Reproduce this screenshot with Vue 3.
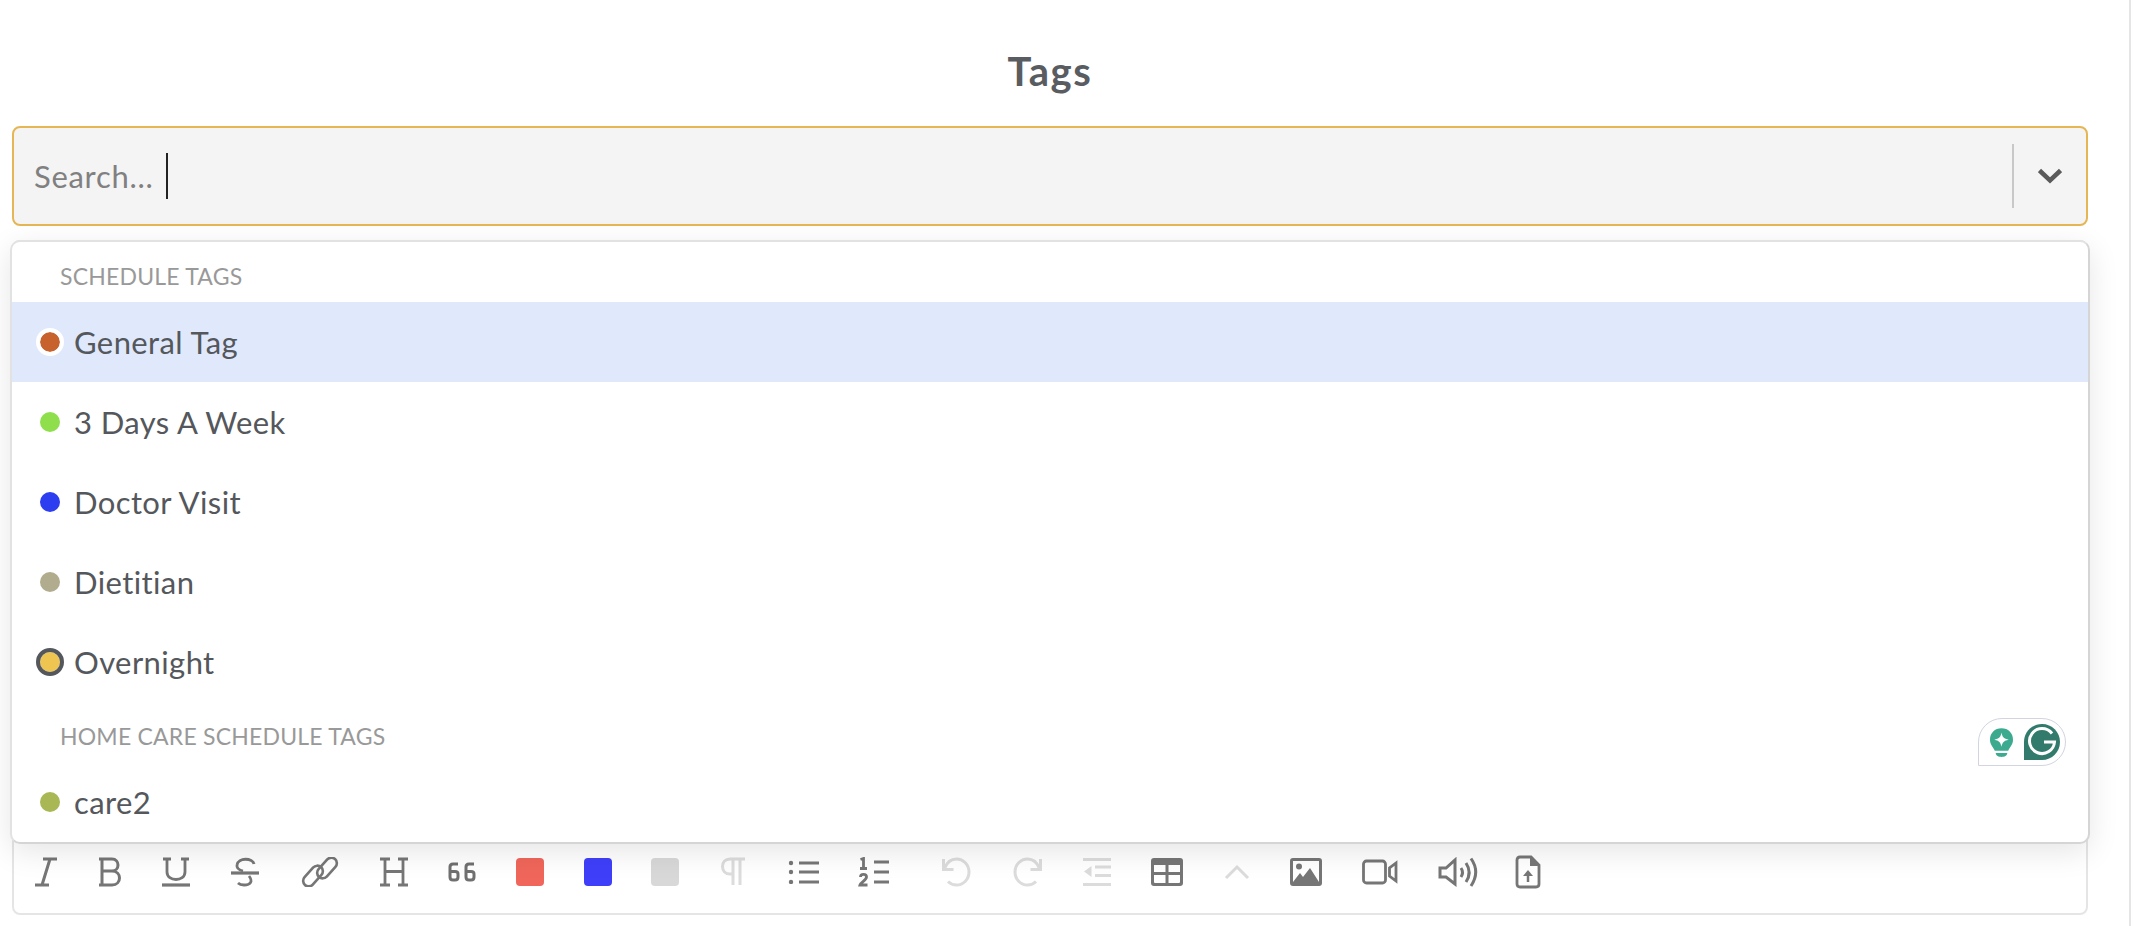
<script setup>
const groups = [
  { title: 'SCHEDULE TAGS', items: [
    { name: 'General Tag', color: '#c8622c', ring: 'ring-white', active: true },
    { name: '3 Days A Week', color: '#8fdf4c' },
    { name: 'Doctor Visit', color: '#2d3df0' },
    { name: 'Dietitian', color: '#b1ac8e' },
    { name: 'Overnight', color: '#efc552', ring: 'ring-dark' }
  ]},
  { title: 'HOME CARE SCHEDULE TAGS', items: [
    { name: 'care2', color: '#a9b754' }
  ]}
]
const tools = [
  { w: 64, k: 'italic' }, { w: 64, k: 'bold' }, { w: 68, k: 'under' }, { w: 70, k: 'strike' },
  { w: 80, k: 'link' }, { w: 68, k: 'head' }, { w: 68, k: 'quote' }, { w: 68, k: 'red' },
  { w: 68, k: 'blue' }, { w: 66, k: 'gray' }, { w: 70, k: 'para' }, { w: 70, k: 'ul' },
  { w: 72, k: 'ol' }, { w: 92, k: 'undo' }, { w: 52, k: 'redo' }, { w: 86, k: 'outdent' },
  { w: 54, k: 'table' }, { w: 86, k: 'chev' }, { w: 52, k: 'image' }, { w: 96, k: 'video' },
  { w: 60, k: 'audio' }, { w: 80, k: 'file' }
]
</script>

<template>
  <div class="page">
    <h1 class="title">Tags</h1>
    <div class="field">
      <span class="placeholder">Search...</span>
      <span class="caret"></span>
      <span class="spacer"></span>
      <span class="divider"></span>
      <svg class="arrow" viewBox="0 0 24 16" width="24" height="16"><path d="M1.500 2.500 L12 12.500 L22.500 2.500" fill="none" stroke="#5a5a5a" stroke-width="4.500"/></svg>
    </div>
    <div class="editor">
      <div class="toolbar">
        <span v-for="t in tools" :key="t.k" class="tool" :style="{ width: t.w + 'px' }">
          <svg v-if="t.k === 'italic'" viewBox="0 0 30 30" width="30" height="30"><g stroke="#767676" stroke-width="3" fill="none"><path d="M12 2 H26 M4 28 H18 M19 2 L11 28"/></g></svg>
          <svg v-else-if="t.k === 'bold'" viewBox="0 0 30 30" width="30" height="30"><g stroke="#767676" stroke-width="3" fill="none"><path d="M4 2 H17 C25 2 25 14 17 14 H7 M17 14 C27 14 27 28 17 28 H4 M7 2 V28"/></g></svg>
          <svg v-else-if="t.k === 'under'" viewBox="0 0 30 30" width="30" height="30"><g stroke="#767676" stroke-width="2.800" fill="none"><path d="M2 2 H10 M20 2 H28 M6 2 V15 C6 25 24 25 24 15 V2"/><path d="M1 28 H29" stroke-width="3.200"/></g></svg>
          <svg v-else-if="t.k === 'strike'" viewBox="0 0 30 30" width="30" height="30"><g stroke="#767676" stroke-width="2.800" fill="none"><path d="M24 7 C23 1 8 0 7 8 C6.500 11 9 13 13 14"/><path d="M1 16 H29" stroke-width="3.200"/><path d="M19 19 C23 24 21 28 14 28 C11 28 9 27 8 26"/></g></svg>
          <svg v-else-if="t.k === 'link'" viewBox="0 0 38 30" width="38" height="30"><g stroke="#767676" stroke-width="2.600" fill="none"><rect x="0" y="13.500" width="24" height="11" rx="5.500" transform="rotate(-48 12 19)"/><rect x="14" y="5.500" width="24" height="11" rx="5.500" transform="rotate(-48 26 11)"/></g></svg>
          <svg v-else-if="t.k === 'head'" viewBox="0 0 30 30" width="30" height="30"><g stroke="#767676" stroke-width="2.800" fill="none"><path d="M1 2 H11 M19 2 H29 M1 28 H11 M19 28 H29 M6 2 V28 M24 2 V28 M6 14.500 H24"/></g></svg>
          <svg v-else-if="t.k === 'quote'" viewBox="0 0 30 20" width="30" height="20"><g stroke="#707070" stroke-width="3" fill="none"><path d="M11 2 H6 Q3 2 3 5 V15 Q3 18 6 18 H8 Q11 18 11 15 V12 Q11 9.500 8 9.500 H3"/><path d="M27 2 H22 Q19 2 19 5 V15 Q19 18 22 18 H24 Q27 18 27 15 V12 Q27 9.500 24 9.500 H19"/></g></svg>
          <span v-else-if="t.k === 'red'" class="swatch red"></span>
          <span v-else-if="t.k === 'blue'" class="swatch blue"></span>
          <span v-else-if="t.k === 'gray'" class="swatch gray"></span>
          <svg v-else-if="t.k === 'para'" viewBox="0 0 28 30" width="28" height="30"><g fill="none" stroke="#dcdcdc" stroke-width="3"><path d="M26 2 H11 C1 2 1 17 11 17 H14 M14 2 V28 M21 2 V28"/></g></svg>
          <svg v-else-if="t.k === 'ul'" viewBox="0 0 32 24" width="32" height="24"><g fill="#767676"><circle cx="4" cy="3" r="2.200"/><circle cx="4" cy="12" r="2.200"/><circle cx="4" cy="22" r="2.200"/><rect x="12" y="1.500" width="20" height="3"/><rect x="12" y="10.500" width="20" height="3"/><rect x="12" y="20.500" width="20" height="3"/></g></svg>
          <svg v-else-if="t.k === 'ol'" viewBox="0 0 32 30" width="32" height="30"><g fill="#767676"><rect x="16" y="3.500" width="15" height="3"/><rect x="16" y="13.500" width="15" height="3"/><rect x="16" y="23.500" width="15" height="3"/></g><g fill="none" stroke="#767676" stroke-width="2.800"><path d="M2.500 2.500 L5.500 1.500 V11 M2 11.500 H9"/><path d="M2.500 20 C2.500 16.500 8.500 16.500 8.500 20 C8.500 23 3 25 2 28 H9.500"/></g></svg>
          <svg v-else-if="t.k === 'undo'" viewBox="0 0 30 30" width="30" height="30"><g fill="none" stroke="#dcdcdc" stroke-width="3"><path d="M2.500 2 V12.500 H12.500"/><path d="M3.500 11.500 C6 5 11 2 15.500 2 A12.500 13 0 0 1 15.500 28 C12 28 9 26.500 7 24.500"/></g></svg>
          <svg v-else-if="t.k === 'redo'" viewBox="0 0 30 30" width="30" height="30"><g fill="none" stroke="#dcdcdc" stroke-width="3"><path d="M27.500 2 V12.500 H17.500"/><path d="M26.500 11.500 C24 5 19 2 14.500 2 A12.500 13 0 0 0 14.500 28 C18 28 21 26.500 23 24.500"/></g></svg>
          <svg v-else-if="t.k === 'outdent'" viewBox="0 0 30 30" width="30" height="30"><g fill="#dcdcdc"><rect x="1" y="1" width="28" height="3"/><rect x="13" y="8.500" width="16" height="3"/><rect x="13" y="17" width="16" height="3"/><rect x="1" y="26" width="28" height="3"/><path d="M9.500 9 V20 L2 14.500 Z"/></g></svg>
          <svg v-else-if="t.k === 'table'" viewBox="0 0 32 30" width="32" height="30"><path fill="#767676" fill-rule="evenodd" d="M3 1 H29 Q32 1 32 4 V26 Q32 29 29 29 H3 Q0 29 0 26 V4 Q0 1 3 1 Z M3 8 V15 H14.500 V8 Z M17.500 8 V15 H29 V8 Z M3 18 V25 Q3 26 4 26 H14.500 V18 Z M17.500 18 V26 H28 Q29 26 29 25 V18 Z"/></svg>
          <svg v-else-if="t.k === 'chev'" viewBox="0 0 26 16" width="26" height="16"><path d="M2 14 L13 3 L24 14" fill="none" stroke="#dcdcdc" stroke-width="3"/></svg>
          <svg v-else-if="t.k === 'image'" viewBox="0 0 32 30" width="32" height="30"><path fill="#767676" fill-rule="evenodd" d="M3 1 H29 Q32 1 32 4 V26 Q32 29 29 29 H3 Q0 29 0 26 V4 Q0 1 3 1 Z M3 4 V25 L10 16 L13 20 L20 11 L29 25 V4 Z"/><circle cx="9" cy="9.500" r="3" fill="#767676"/></svg>
          <svg v-else-if="t.k === 'video'" viewBox="0 0 36 26" width="36" height="26"><g fill="none" stroke="#767676" stroke-width="2.800"><rect x="1.500" y="2" width="22" height="22" rx="3"/><path d="M34 4 V22 L27.500 17 V9 Z"/></g></svg>
          <svg v-else-if="t.k === 'audio'" viewBox="0 0 40 30" width="40" height="30"><g fill="none" stroke="#767676" stroke-width="3"><path d="M2 11 H8 L17 3 V27 L8 20 H2 Z"/><path d="M23 11 C25 14 25 17 23 20"/><path d="M28 6 C32 12 32 19 28 25"/><path d="M33 1.500 C39 10 39 20 33 29"/></g></svg>
          <svg v-else-if="t.k === 'file'" viewBox="0 0 26 34" width="26" height="34"><g fill="none" stroke="#767676" stroke-width="2.800"><path d="M5 2 H16 L24 10 V29 Q24 32 21 32 H5 Q2 32 2 29 V5 Q2 2 5 2 Z"/><path d="M13 27 V20" stroke-width="2.500"/></g><path d="M8 21 L13 15 L18 21 Z" fill="#767676"/><path d="M15 2 H17 L24 9 V11 H15 Z" fill="#767676"/></svg>
        </span>
      </div>
    </div>

    <div class="menu">
      <template v-for="g in groups" :key="g.title">
        <div class="group-title">{{ g.title }}</div>
        <div v-for="o in g.items" :key="o.name" class="option" :class="{ active: o.active }">
          <span class="dot" :class="o.ring" :style="{ background: o.color }"></span>
          <span>{{ o.name }}</span>
        </div>
      </template>
      <div class="badge">
        <svg viewBox="0 0 24 30" width="23" height="29"><path fill="#3caa8e" d="M12 0 C19 0 24 5 24 12 C24 17 21 19 19 23.500 H5 C3 19 0 17 0 12 C0 5 5 0 12 0 Z"/><path fill="#3caa8e" d="M6 26 H18 C18 29 15 30 12 30 C9 30 6 29 6 26 Z"/><path fill="#fff" d="M12 4.500 C13 9.500 14.500 11 19.500 12 C14.500 13 13 14.500 12 19.500 C11 14.500 9.500 13 4.500 12 C9.500 11 11 9.500 12 4.500 Z"/></svg>
        <svg viewBox="0 0 36 36" width="36" height="36"><path fill="#327a6c" d="M18 0 C28 0 36 8 36 18 C36 28 28 36 18 36 H0 V18 C0 8 8 0 18 0 Z"/><path fill="none" stroke="#fff" stroke-width="3" d="M28 9.500 A12.500 12.500 0 1 0 30.500 18 H20"/></svg>
      </div>
    </div>
    <div class="rail"></div>
  </div>
</template>

<style>
html, body { margin: 0; background: #fff; }
</style>

<style scoped>
.page {
  position: relative;
  width: 2140px;
  height: 926px;
  overflow: hidden;
  background: #fff;
  font-family: Lato, "Open Sans", sans-serif;
  padding: 0 52px 0 12px;
  box-sizing: border-box;
  display: flex;
  flex-direction: column;
}
.title {
  margin: 0;
  height: 126px;
  line-height: 142px;
  box-sizing: border-box;
  text-align: center;
  font-size: 40px;
  letter-spacing: 1.6px;
  font-weight: 700;
  color: #595c60;
}
.field {
  height: 100px;
  box-sizing: border-box;
  border: 2px solid #e6b655;
  border-radius: 8px;
  background: #f4f4f4;
  display: flex;
  align-items: center;
  padding: 0 24px 0 20px;
}
.placeholder { font-size: 31px; letter-spacing: 0.7px; color: #808080; }
.caret { width: 2px; height: 46px; background: #222; margin-left: 12px; }
.spacer { flex: 1; }
.divider { width: 2px; height: 64px; background: #c8c8c8; margin-right: 24px; }
.editor {
  flex: none;
  margin-top: 14px;
  height: 675px;
  box-sizing: border-box;
  border: 2px solid #e5e5e5;
  border-radius: 8px;
  display: flex;
  flex-direction: column;
  justify-content: flex-end;
  padding-bottom: 18px;
}
.toolbar { display: flex; align-items: center; height: 46px; }
.tool { flex: none; display: flex; justify-content: center; align-items: center; }
.swatch { display: block; width: 28px; height: 28px; border-radius: 4px; }
.red { background: #f0665a; }
.blue { background: #3f3ffa; }
.gray { background: #d8d8d8; }
.menu {
  position: absolute;
  left: 10px;
  top: 240px;
  width: 2080px;
  height: 604px;
  box-sizing: border-box;
  border: 2px solid #e2e2e2;
  border-bottom-color: #d5d5d5;
  border-right-color: #d5d5d5;
  border-radius: 10px;
  background: #fff;
  box-shadow: 0 8px 30px rgba(0, 0, 0, 0.1);
  overflow: hidden;
}
.group-title {
  height: 60px;
  box-sizing: border-box;
  padding: 4px 0 0 48px;
  line-height: 60px;
  font-size: 23px;
  letter-spacing: 0.2px;
  color: #999;
}
.option {
  height: 80px;
  display: flex;
  align-items: center;
  font-size: 31px;
  letter-spacing: 0.4px;
  color: #54575b;
  padding-left: 28px;
  gap: 14px;
}
.option.active { background: #e0e9fc; }
.dot {
  width: 20px;
  height: 20px;
  flex: none;
  margin: 0 -4px;
  border: 4px solid transparent;
  border-radius: 50%;
  background-clip: padding-box !important;
}
.ring-white { border-color: #fff; }
.ring-dark { border-color: #54575b; }
.badge {
  position: absolute;
  right: 22px;
  bottom: 76px;
  width: 88px;
  height: 48px;
  box-sizing: border-box;
  border: 1.5px solid #d2d4e0;
  border-radius: 24px 24px 24px 0;
  background: #fff;
  display: flex;
  align-items: center;
  padding-left: 11px;
  gap: 11px;
}
.rail {
  position: absolute;
  left: 2129px;
  top: 0;
  width: 2px;
  height: 926px;
  background: #e5e5e5;
}
</style>
